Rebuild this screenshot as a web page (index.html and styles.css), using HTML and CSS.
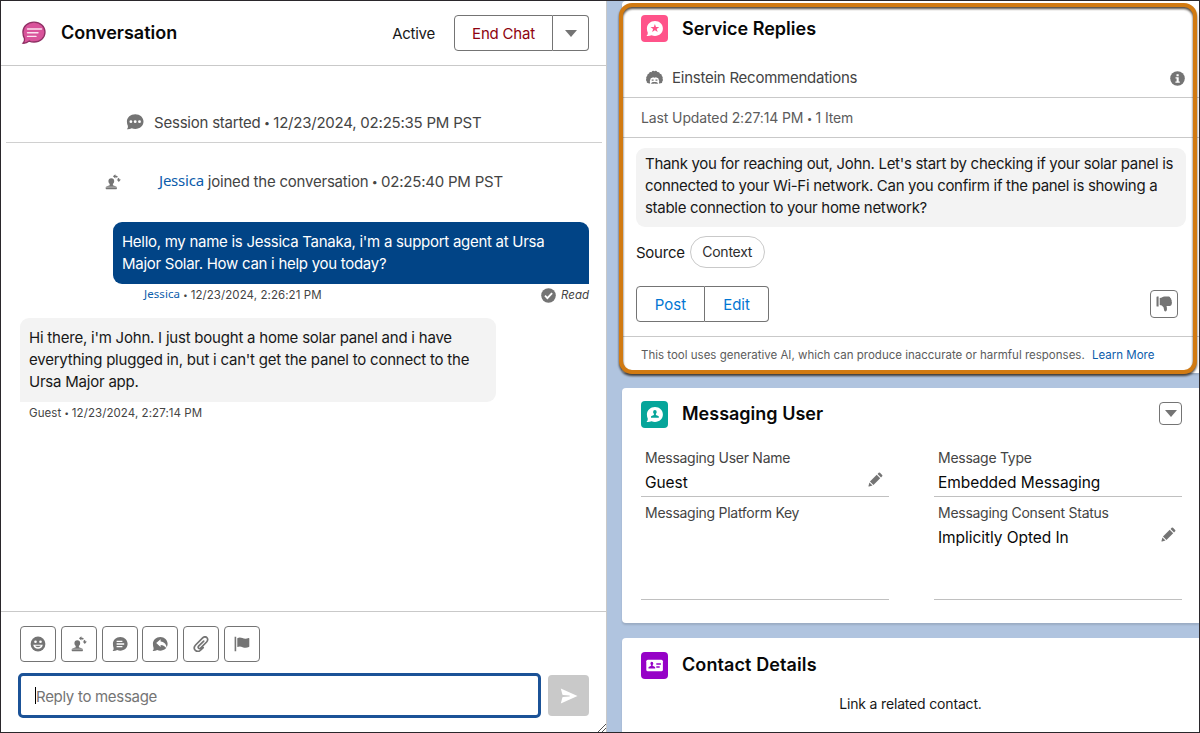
FILE: index.html
```html
<!DOCTYPE html>
<html lang="en">
  <head>
    <meta charset="UTF-8" />
    <meta name="viewport" content="width=device-width, initial-scale=1.0" />
    <title>Conversation</title>
    <link rel="stylesheet" href="styles.css">
  </head>
  <body>
    <!-- Shared icons -->
    <svg class="sprite" width="0" height="0">
      <symbol id="icon-transfer" viewBox="0 0 16 16">
        <path d="M6.300 4.200q2.900 0 2.900 3 0 1.700-1.300 2.800v1.200l3.300 1.200q.7.300.7 1v1.200q0 .6-.6.600H1.300q-.6 0-.6-.6v-1.200q0-.7.700-1l3.300-1.200V10Q3.400 8.900 3.400 7.200q0-3 2.900-3z" />
        <path d="M.7 13.100h11.200" stroke="#fff" stroke-width=".5" />
        <path d="M9.800 2.300q1.700.1 2.600 1M13.200 4.300q.6.900.7 2" fill="none" stroke="currentColor" stroke-width="1.600" />
        <path d="M10.400.200v4.200L7.900 2.300zM11.700 5.500h4.200l-2.100 2.600z" />
      </symbol>
      <symbol id="icon-pencil" viewBox="0 0 16 16">
        <path d="M2.100 10.200l7.200-7.200 3.700 3.700-7.200 7.200zM10.200 2.100l1.200-1.200q.7-.6 1.400 0l2.300 2.300q.7.700 0 1.400l-1.200 1.200zM1.500 11.200l3.300 3.300-3.600 1q-.9.200-.7-.7z" />
      </symbol>
    </svg>

    <div class="console">
      <section class="conversation">
        <header class="conv-header">
          <svg class="conv-icon" viewBox="0 0 25 24">
            <path d="M13 1.200c6.200 0 11 4.200 11 9.900s-4.800 9.900-11 9.900c-1.700 0-3.300-.3-4.700-.9-2 1.500-4.300 2.300-6.300 2.100 1.400-1.600 1.800-3 1.500-4.600C2.500 15.800 1.900 13.600 1.900 11.100 1.900 5.400 6.800 1.200 13 1.200z" fill="#d9539b" stroke="#8f3064" stroke-width="1.300" />
            <path d="M6.500 8h14M6.500 11.700h10.500M6.500 15.400h8.500" stroke="#fbe3f0" stroke-width="1.400" stroke-linecap="round" />
          </svg>
          <h2>Conversation</h2>
          <span class="status">Active</span>
          <div class="button-group">
            <button class="end-chat">End Chat</button>
            <button class="more"><span class="caret"></span></button>
          </div>
        </header>

        <div class="messages">
          <div class="event session">
            <svg width="18" height="16" viewBox="0 0 18 16">
              <path d="M9.300.200C14 .2 17.500 3.300 17.500 7.500S14 14.900 9.300 14.900c-1.300 0-2.500-.2-3.500-.7q-2.500 1.300-4.900 1 1.400-1.500 1-3.200C1.300 10.700.9 9.200.9 7.500.9 3.300 4.600.2 9.300.2z" />
              <g fill="#fff"><circle cx="4.900" cy="7.700" r="1.400" /><circle cx="9.200" cy="7.700" r="1.400" /><circle cx="13.500" cy="7.700" r="1.400" /></g>
            </svg>
            <span>Session started <b class="dot">•</b> 12/23/2024, 02:25:35 PM PST</span>
          </div>
          <div class="event joined">
            <svg width="16" height="16"><use href="#icon-transfer" /></svg>
            <span><a>Jessica</a> joined the conversation <b class="dot">•</b> 02:25:40 PM PST</span>
          </div>

          <div class="bubble agent">Hello, my name is Jessica Tanaka, i'm a support agent at Ursa<br>Major Solar. How can i help you today?</div>
          <div class="meta agent-meta">
            <span><a>Jessica</a> <b class="dot">•</b> 12/23/2024, 2:26:21 PM</span>
            <span class="read">
              <svg width="15" height="15" viewBox="0 0 15 15">
                <circle cx="7.500" cy="7.500" r="7.300" />
                <path d="M4 7.700l2.400 2.400 4.700-5" fill="none" stroke="#fff" stroke-width="1.900" />
              </svg>
              <i>Read</i>
            </span>
          </div>

          <div class="bubble guest">Hi there, i'm John. I just bought a home solar panel and i have<br>everything plugged in, but i can't get the panel to connect to the<br>Ursa Major app.</div>
          <div class="meta guest-meta">Guest <b class="dot">•</b> 12/23/2024, 2:27:14 PM</div>
        </div>

        <footer class="composer">
          <div class="tools">
            <button>
              <svg viewBox="0 0 16 16">
                <circle cx="8" cy="8" r="7.400" />
                <g fill="#fff"><circle cx="5.500" cy="5.700" r="1.300" /><circle cx="10.500" cy="5.700" r="1.300" /><path d="M3.200 8.800h9.600q-.8 3.900-4.800 3.900T3.200 8.800z" /></g>
                <path d="M5 9.800h6q-.9 1.400-3 1.400T5 9.800z" />
              </svg>
            </button>
            <button><svg viewBox="0 0 16 16"><use href="#icon-transfer" /></svg></button>
            <button>
              <svg viewBox="0 0 16 16">
                <path d="M8.300.9c4.200 0 7.300 3 7.300 6.900s-3.100 6.900-7.300 6.900c-1.100 0-2.100-.2-3-.6q-2.400 1.100-4.700.9 1.400-1.500 1-3C1.200 10.800.9 9.200.9 7.800.9 3.900 4.100.9 8.300.9z" />
                <path d="M4.600 5.300h5.800M4.600 8h7.600M4.600 10.700h5.800" stroke="#fff" stroke-width="1.300" />
              </svg>
            </button>
            <button>
              <svg viewBox="0 0 16 16">
                <path d="M8.300.9c4.200 0 7.300 3 7.300 6.900s-3.100 6.900-7.300 6.900c-1.100 0-2.100-.2-3-.6q-2.400 1.100-4.700.9 1.400-1.500 1-3C1.200 10.800.9 9.200.9 7.800.9 3.900 4.100.9 8.300.9z" />
                <path d="M8.600 3.200L4.200 7.100 8.600 11V8.900c2.600 0 4.400 1.300 6.400 4.200-.2-4.500-2.400-7.300-6.400-7.700z" fill="#fff" />
              </svg>
            </button>
            <button>
              <svg viewBox="0 0 16 16">
                <path d="M10.700 5.100L5.600 10.200c-1.400 1.500.6 3.300 2 1.900l6-6.100c3.100-3.400-1-7-4.200-3.900L2.600 9c-3.600 4 1.300 8.700 5.200 5l2.400-2.400" fill="none" stroke="currentColor" stroke-width="1.700" stroke-linecap="round" />
              </svg>
            </button>
            <button>
              <svg viewBox="0 0 16 16">
                <path d="M.6.700h1.600v14.600H.6zM3.300 2.200c4.200-2.300 5.500 2 11.300-.1q.7-.2.700.5v7.900q0 .4-.4.600C9.100 13.400 7.700 8.700 3.300 11.100z" />
              </svg>
            </button>
          </div>
          <div class="reply-row">
            <div class="reply-input"><span class="cursor"></span><span class="placeholder">Reply to message</span></div>
            <button class="send">
              <svg width="18" height="16" viewBox="0 0 18 16"><path d="M.8.600L17.500 8 .8 15.400l1.500-5.700q.1-.5.700-.6l6.500-.5q.6-.6 0-1.200L3 6.900q-.6-.1-.7-.6z" /></svg>
            </button>
          </div>
          <svg class="resizer" width="8" height="8" viewBox="0 0 8 8"><path d="M0 8L8 0M4 8l4-4" stroke="#555" /></svg>
        </footer>
      </section>

      <aside class="sidebar">
        <section class="card replies">
          <header class="card-header">
            <svg class="card-icon pink" viewBox="0 0 27 27">
              <path d="M14 6.100c4.500 0 7.900 3.200 7.900 7.400s-3.400 7.400-7.900 7.400c-1.300 0-2.400-.2-3.400-.6q-2.600 1-5.100.6 1.500-1.400 1.300-3.200c-.6-1.200-.9-2.700-.9-4.200C5.900 9.300 9.500 6.100 14 6.100z" fill="#fff" />
              <path d="M13.900 9l1.100 3h3.300l-2.600 2 1 3.100-2.800-1.900-2.800 1.900 1-3.100-2.600-2h3.300z" fill="#ff538a" />
            </svg>
            <h2>Service Replies</h2>
          </header>
          <div class="einstein">
            <svg width="17" height="15" viewBox="0 0 17 15">
              <path d="M2.300 13.300Q.2 13 .8 11.300-.6 10.200.4 8.700-.3 7 1.200 6 1 3.900 3 3.500 3.500 1.600 5.400 2.200 6.600.2 8.400 1.200q1.800-1.100 3 .8 2.200-.4 2.500 1.700 2.200.3 1.900 2.300 1.500 1 .7 2.800 1 1.300-.3 2.600.4 1.700-1.600 1.900l-1.100.1H3.400z" />
              <path d="M4.200 14.400Q3.300 10.200 4.900 8q1.300.1 2.100-.8 1.500.9 3 0 .8.900 2.100.8 1.700 2.200.7 6.400z" fill="#fff" />
              <path d="M5.700 9.500h1.900v1.300H5.700zM9.500 9.500h1.900v1.300H9.500zM4.900 13.400q1.500-2 3.600-1.300 2.200-.7 3.700 1.300-1.700.7-3.700.1-1.900.6-3.600-.1z" />
            </svg>
            <span>Einstein Recommendations</span>
            <svg class="info" width="15" height="15" viewBox="0 0 15 15">
              <circle cx="7.500" cy="7.500" r="7.300" />
              <path d="M6.500 3.300h2.200v1.900H6.500zM5.500 6.200h3.200v4.200h1.100v1.300H5.400v-1.300h1.200V7.500H5.500z" fill="#fff" />
            </svg>
          </div>
          <div class="updated">Last Updated 2:27:14 PM <b class="dot">•</b> 1 Item</div>
          <div class="suggestion">
            <p>Thank you for reaching out, John. Let's start by checking if your solar panel is<br>connected to your Wi-Fi network. Can you confirm if the panel is showing a<br>stable connection to your home network?</p>
            <div class="source">Source <span class="pill">Context</span></div>
            <div class="actions">
              <div class="button-group">
                <button class="post">Post</button>
                <button class="edit">Edit</button>
              </div>
              <button class="thumbs-down">
                <svg width="16" height="16" viewBox="0 0 16 16">
                  <path d="M.5 1.300q0-.7.700-.7h1.400v10H1.200q-.7 0-.7-.7zM3.700 1.900C6 1.600 6.500.4 8.500.4h4.300q1.500 0 1.500 1.500 1.200.5.900 1.800.9.800.4 2 .7.900.1 2 .2 2.200-1.700 2.200h-3.500q.6 1.700.4 3.800-.2 1.700-1.600 1.700-1.200 0-1.200-1.300 0-3.200-2.300-4.600L3.700 9z" />
                </svg>
              </button>
            </div>
          </div>
          <div class="disclaimer">This tool uses generative AI, which can produce inaccurate or harmful responses. <a>Learn More</a></div>
          <div class="highlight"></div>
        </section>

        <section class="card user">
          <header class="card-header">
            <svg class="card-icon teal" viewBox="0 0 27 27">
              <path d="M14 6.100c4.500 0 7.900 3.200 7.900 7.400s-3.400 7.400-7.900 7.400c-1.300 0-2.400-.2-3.400-.6q-2.600 1-5.100.6 1.500-1.400 1.300-3.200c-.6-1.200-.9-2.700-.9-4.200C5.900 9.300 9.500 6.100 14 6.100z" fill="#fff" />
              <path d="M13.900 9q1.800 0 1.800 1.900 0 1-.8 1.800v1.200l2.400 1.100q.5.200.5.800v.9H10v-.9q0-.6.500-.8l2.400-1.100v-1.200q-.8-.8-.8-1.800 0-1.900 1.800-1.900z" fill="#06a59a" />
            </svg>
            <h2>Messaging User</h2>
            <button class="menu"><span class="caret"></span></button>
          </header>
          <div class="fields">
            <div class="field">
              <label>Messaging User Name</label>
              <div class="value">Guest</div>
              <svg class="pencil"><use href="#icon-pencil" /></svg>
            </div>
            <div class="field">
              <label>Message Type</label>
              <div class="value">Embedded Messaging</div>
            </div>
            <div class="field">
              <label>Messaging Platform Key</label>
            </div>
            <div class="field">
              <label>Messaging Consent Status</label>
              <div class="value">Implicitly Opted In</div>
              <svg class="pencil"><use href="#icon-pencil" /></svg>
            </div>
          </div>
        </section>

        <section class="card contact">
          <header class="card-header">
            <svg class="card-icon purple" viewBox="0 0 27 27">
              <rect x="5.300" y="7.800" width="16.600" height="11.400" rx="1.500" fill="#fff" />
              <path d="M10.800 9.800q1.500 0 1.500 1.700 0 .9-.7 1.500v.8l2 .9q.6.200.6.800v.9H7.500v-.9q0-.6.600-.8l2-.9V13q-.7-.6-.7-1.500 0-1.700 1.400-1.700zM15.300 11.300h4.600v1.500h-4.600zM15.300 14.300h3.400v1.500h-3.400z" fill="#9602c7" />
            </svg>
            <h2>Contact Details</h2>
          </header>
          <p class="empty">Link a related contact.</p>
        </section>
      </aside>
    </div>
  </body>
</html>
```
FILE: styles.css
```css
* {
  box-sizing: border-box;
}

body {
  margin: 0;
  font-family: Inter, 'Liberation Sans', sans-serif;
  font-size: 15px;
  letter-spacing: -0.25px;
  color: #181818;
  background: #b0c4df;
}

h2,
p {
  margin: 0;
}

h2 {
  font-size: 18px;
  font-weight: 600;
  line-height: 24px;
  letter-spacing: 0;
  color: #080808;
}

a {
  color: #0b5cab;
}

button {
  display: flex;
  align-items: center;
  justify-content: center;
  padding: 0;
  font: inherit;
  background: #fff;
  border: 1px solid #747474;
  border-radius: 4px;
}

svg {
  display: block;
  flex: none;
  color: #747474;
  fill: currentColor;
}

.sprite {
  position: absolute;
}

.console {
  display: flex;
  height: 733px;
  overflow: hidden;
  border: 1px solid #2a272b;
}

.caret {
  border: 6px solid transparent;
  border-top: 7px solid #747474;
  border-bottom: 0;
}

.dot {
  font-size: 0.7em;
  vertical-align: 0.1em;
}

.button-group {
  display: flex;
}

.button-group button:first-child {
  border-radius: 4px 0 0 4px;
}

.button-group button:last-child {
  border-left: 0;
  border-radius: 0 4px 4px 0;
}

/* Conversation panel */
.conversation {
  display: flex;
  flex-direction: column;
  width: 606px;
  background: #fff;
  border-right: 1px solid #c9c9c9;
}

.conv-header {
  display: flex;
  align-items: center;
  height: 65px;
  padding: 0 17px 0 20px;
  border-bottom: 1px solid #c9c9c9;
}

.conv-icon {
  width: 25px;
  height: 24px;
  margin-right: 15px;
}

.status {
  margin: 0 19px 0 auto;
}

.conv-header .button-group button {
  height: 36px;
}

.conv-header .end-chat {
  width: 99px;
  letter-spacing: -0.2px;
  color: #8e030f;
}

.conv-header .more {
  width: 36px;
}

.messages {
  flex: 1;
}

.event {
  display: flex;
  align-items: center;
  letter-spacing: -0.22px;
  color: #444;
}

.session {
  height: 77px;
  margin: 0 4px 0 5px;
  padding: 36px 0 0 120px;
  gap: 10px;
  border-bottom: 1px solid #d0d0d0;
}

.joined {
  height: 79px;
  padding: 0 0 1px 104px;
  gap: 38px;
}

.joined > span {
  line-height: 20px;
  margin-top: -1px;
}

.joined a,
.meta a {
  position: relative;
  top: -1px;
  font-family: 'Noto Sans', sans-serif;
}

.bubble {
  width: 476px;
  padding: 9px;
  line-height: 22px;
  white-space: nowrap;
}

.agent {
  height: 62px;
  margin-left: 112px;
  letter-spacing: -0.28px;
  color: #fff;
  background: #014486;
  border-radius: 9px 9px 0 9px;
}

.guest {
  height: 84px;
  margin-left: 19px;
  letter-spacing: -0.22px;
  background: #f3f3f3;
  border-radius: 9px 9px 9px 0;
}

.meta {
  font-size: 11.500px;
  line-height: 22px;
  letter-spacing: 0.08px;
  color: #444;
}

.agent-meta {
  display: flex;
  justify-content: space-between;
  height: 34px;
  padding: 0 17px 0 143px;
}

.read {
  display: flex;
  align-items: center;
  gap: 5px;
  height: 22px;
  letter-spacing: 0;
}

.guest-meta {
  padding-left: 28px;
}

.composer {
  position: relative;
  height: 121px;
  padding: 14px 17px 0;
  border-top: 1px solid #c9c9c9;
}

.tools {
  display: flex;
  gap: 4.800px;
  padding-left: 2px;
}

.tools button {
  width: 36px;
  height: 36px;
}

.tools svg {
  width: 16px;
  height: 16px;
}

.reply-row {
  display: flex;
  align-items: center;
  gap: 7px;
  margin-top: 11px;
}

.reply-input {
  display: flex;
  align-items: center;
  width: 523px;
  height: 45px;
  padding-left: 14px;
  letter-spacing: -0.3px;
  color: #747474;
  border: 3px solid #1b5297;
  border-radius: 5px;
}

.cursor {
  width: 1px;
  height: 17px;
  background: #000;
}

.placeholder {
  padding-top: 2px;
}

.send {
  width: 41px;
  height: 41px;
  background: #c9c9c9;
  border: 0;
}

.send svg {
  color: #fff;
}

.resizer {
  position: absolute;
  right: 0;
  bottom: 0;
}

/* Right column */
.sidebar {
  flex: 1;
  display: flex;
  flex-direction: column;
  gap: 15px;
  padding-left: 15px;
}

.card {
  flex: none;
  background: #fff;
  border-radius: 4px 0 0 4px;
  box-shadow: 0 2px 2px rgba(0, 0, 0, 0.12);
}

.card-header {
  display: flex;
  align-items: center;
  gap: 14px;
  padding-left: 19px;
}

.card-icon {
  width: 27px;
  height: 27px;
  border-radius: 4px;
}

.pink {
  background: #ff538a;
}

.teal {
  background: #06a59a;
}

.purple {
  background: #9602c7;
}

/* Service Replies */
.replies {
  position: relative;
  height: 372px;
}

.replies .card-header {
  height: 55px;
}

.einstein {
  display: flex;
  align-items: center;
  gap: 9px;
  height: 42px;
  padding: 2px 14px 0 24px;
  color: #444;
  border-bottom: 1px solid #c9c9c9;
}

.info {
  margin: 2px 0 0 auto;
}

.updated {
  height: 40px;
  padding-left: 19px;
  font-size: 14px;
  line-height: 40px;
  letter-spacing: -0.12px;
  color: #5c5c5c;
  border-bottom: 1px solid #c9c9c9;
}

.suggestion {
  height: 199px;
  padding: 10px 13px 0 14px;
  border-bottom: 1px solid #c9c9c9;
}

.suggestion p {
  height: 79px;
  padding: 5px 9px;
  line-height: 22px;
  letter-spacing: -0.3px;
  white-space: nowrap;
  background: #f3f3f3;
  border-radius: 9px;
}

.source {
  display: flex;
  align-items: center;
  gap: 5px;
  height: 32px;
  margin-top: 9px;
}

.pill {
  width: 75px;
  font-size: 14px;
  line-height: 30px;
  text-align: center;
  color: #2e2e2e;
  border: 1px solid #c9c9c9;
  border-radius: 16px;
}

.actions {
  display: flex;
  align-items: center;
  justify-content: space-between;
  margin-top: 18px;
  padding-right: 8px;
}

.actions .button-group button {
  height: 36px;
  letter-spacing: 0;
  color: #0176d3;
}

.post {
  width: 69px;
}

.edit {
  width: 64px;
}

.thumbs-down {
  width: 28px;
  height: 28px;
}

.disclaimer {
  padding-left: 19px;
  font-size: 11.500px;
  line-height: 37px;
  letter-spacing: 0;
  color: #5c5c5c;
}

.disclaimer a {
  margin-left: 4px;
}

.highlight {
  position: absolute;
  top: 2px;
  left: -3px;
  width: 578px;
  height: 371px;
  border: 4px solid #d17a12;
  border-radius: 13px;
  filter: drop-shadow(0 2px 1px rgba(40, 30, 20, 0.8));
}

/* Messaging User */
.user {
  height: 235px;
}

.user .card-header {
  height: 52px;
}

.menu {
  width: 23px;
  height: 23px;
  margin: -2px 17px 0 auto;
}

.fields {
  display: grid;
  grid-template-columns: 248px 248px;
  grid-template-rows: 57px 103px;
  column-gap: 45px;
  padding-left: 19px;
}

.field {
  position: relative;
  padding: 7px 4px 0;
  border-bottom: 1px solid #c0c0c0;
}

.field label {
  display: block;
  font-size: 14px;
  line-height: 22px;
  letter-spacing: -0.27px;
  color: #444;
}

.field:nth-child(n + 3) {
  padding-top: 5px;
}

.value {
  font-size: 15.500px;
  line-height: 27px;
  letter-spacing: -0.06px;
  color: #080808;
}

.pencil {
  position: absolute;
  right: 6px;
  top: 32px;
  width: 15px;
  height: 15px;
}

.field:nth-child(n + 3) .pencil {
  top: 30px;
}

/* Contact Details */
.contact {
  height: 120px;
}

.contact .card-header {
  height: 54px;
}

.contact h2 {
  letter-spacing: 0.1px;
}

.empty {
  font-size: 14px;
  line-height: 23px;
  letter-spacing: -0.17px;
  text-align: center;
}
```
